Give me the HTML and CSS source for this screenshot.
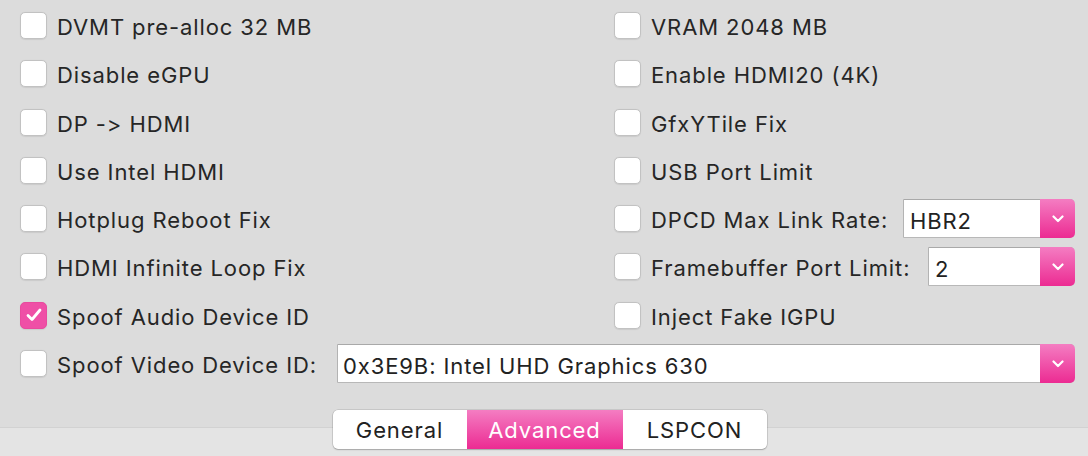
FILE: index.html
```html
<!DOCTYPE html>
<html>
<head>
<meta charset="utf-8">
<link rel="stylesheet" href="styles.css">
</head>
<body>
<div class="panel">
  <div class="grid">
    <label class="opt"><span class="box"></span><span class="txt">DVMT pre-alloc 32 MB</span></label>
    <label class="opt"><span class="box"></span><span class="txt">VRAM 2048 MB</span></label>
    <label class="opt"><span class="box"></span><span class="txt">Disable eGPU</span></label>
    <label class="opt"><span class="box"></span><span class="txt">Enable HDMI20 (4K)</span></label>
    <label class="opt"><span class="box"></span><span class="txt">DP -&gt; HDMI</span></label>
    <label class="opt"><span class="box"></span><span class="txt">GfxYTile Fix</span></label>
    <label class="opt"><span class="box"></span><span class="txt">Use Intel HDMI</span></label>
    <label class="opt"><span class="box"></span><span class="txt">USB Port Limit</span></label>
    <label class="opt"><span class="box"></span><span class="txt">Hotplug Reboot Fix</span></label>
    <div class="opt"><span class="box"></span><span class="txt">DPCD Max Link Rate:</span>
      <div class="select w-dpcd"><span class="val">HBR2</span><span class="arrow"><svg width="12" height="8" viewBox="0 0 12 8"><path d="M1.5 1.5 L6 6 L10.5 1.5" fill="none" stroke="#fff" stroke-width="2.2" stroke-linecap="round" stroke-linejoin="round"/></svg></span></div>
    </div>
    <label class="opt"><span class="box"></span><span class="txt">HDMI Infinite Loop Fix</span></label>
    <div class="opt"><span class="box"></span><span class="txt">Framebuffer Port Limit:</span>
      <div class="select w-fb"><span class="val">2</span><span class="arrow"><svg width="12" height="8" viewBox="0 0 12 8"><path d="M1.5 1.5 L6 6 L10.5 1.5" fill="none" stroke="#fff" stroke-width="2.2" stroke-linecap="round" stroke-linejoin="round"/></svg></span></div>
    </div>
    <label class="opt"><span class="box checked"><svg width="18" height="16" viewBox="0 0 18 16"><path d="M3 8.5 L7 12.5 L15 3" fill="none" stroke="#fff" stroke-width="2.8" stroke-linecap="round" stroke-linejoin="round"/></svg></span><span class="txt">Spoof Audio Device ID</span></label>
    <label class="opt"><span class="box"></span><span class="txt">Inject Fake IGPU</span></label>
    <div class="opt span2"><span class="box"></span><span class="txt">Spoof Video Device ID:</span>
      <div class="select w-vid"><span class="val vid">0x3E9B: Intel UHD Graphics 630</span><span class="arrow"><svg width="12" height="8" viewBox="0 0 12 8"><path d="M1.5 1.5 L6 6 L10.5 1.5" fill="none" stroke="#fff" stroke-width="2.2" stroke-linecap="round" stroke-linejoin="round"/></svg></span></div>
    </div>
  </div>
  <div class="footer">
    <div class="tabs">
      <span class="tab t-gen">General</span>
      <span class="tab t-adv active">Advanced</span>
      <span class="tab t-lsp">LSPCON</span>
    </div>
  </div>
</div>
</body>
</html>
```
FILE: styles.css
```css
html, body {
  margin: 0;
  padding: 0;
}
body {
  width: 1088px;
  height: 456px;
  overflow: hidden;
  background: #dcdcdc;
  font-family: Inter, "Liberation Sans", Arial, sans-serif;
  color: #262626;
}
.panel {
  display: flex;
  flex-direction: column;
  height: 456px;
}
.grid {
  display: grid;
  grid-template-columns: 594px 461px;
  grid-auto-rows: 48.3px;
  padding: 1.35px 13px 0 20px;
  height: 398px;
}
.opt {
  display: flex;
  align-items: center;
  font-size: 22px;
  letter-spacing: 0.9px;
}
.span2 {
  grid-column: 1 / span 2;
}
.box {
  box-sizing: border-box;
  width: 27px;
  height: 27px;
  flex: none;
  background: #fff;
  border: 1px solid #c2c2c2;
  border-radius: 5px;
  box-shadow: 0 0.5px 1px rgba(0,0,0,0.08);
  display: flex;
  align-items: center;
  justify-content: center;
}
.box.checked {
  background: #ef4fa6;
  border-color: #e94a9e;
}
.txt {
  margin-left: 10px;
  padding-top: 3px;
  white-space: nowrap;
}
.select {
  margin-left: auto;
  height: 39px;
  box-sizing: border-box;
  display: flex;
  align-items: stretch;
  background: #fff;
  border-top: 1px solid #a9a9a9;
  border-left: 1px solid #b3b3b3;
  border-bottom: 1px solid #b8b8b8;
  border-radius: 0 5px 5px 0;
}
.w-dpcd { width: 172px; }
.w-fb { width: 147px; }
.w-vid { width: 738px; }
.val {
  flex: 1;
  display: flex;
  align-items: center;
  padding: 4px 0 0 6px;
  font-size: 22px;
  color: #222;
}
.val.vid {
  padding-left: 5px;
}
.arrow {
  width: 35px;
  margin: -1px 0;
  flex: none;
  display: flex;
  align-items: center;
  justify-content: center;
  border-radius: 0 5px 5px 0;
  background: linear-gradient(#f47dc2, #ec2b92);
}
.footer {
  flex: 1;
  display: flex;
  justify-content: center;
  background: linear-gradient(#dcdcdc 0, #dcdcdc 28px, #d2d2d2 28px, #d2d2d2 29px, #e4e4e4 29px);
}
.tabs {
  margin-top: 11px;
  margin-left: 11px;
  height: 39px;
  box-sizing: border-box;
  display: flex;
  background: #fff;
  border-radius: 5px;
  box-shadow: 0 0 0 0.5px rgba(0,0,0,0.18), 0 1px 1.5px rgba(0,0,0,0.2);
  overflow: hidden;
}
.tab {
  display: flex;
  align-items: center;
  justify-content: center;
  font-size: 22px;
  letter-spacing: 0.9px;
  color: #222;
}
.t-gen { width: 134px; }
.t-adv { width: 156px; }
.t-lsp { width: 144px; }
.tab.active {
  color: #fff;
  background: linear-gradient(#f47dc2, #ec2b92);
}
```
